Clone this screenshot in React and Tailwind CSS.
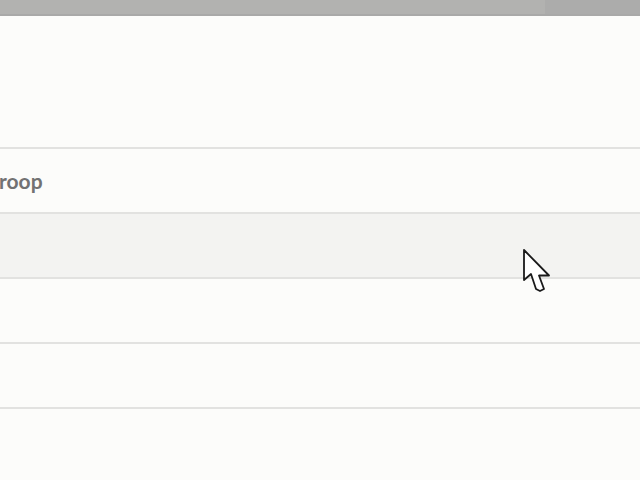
import React from 'react';

const rows = [
  {id: 1, label: 'roop'},
  {id: 2, label: '', hover: true},
  {id: 3, label: ''},
  {id: 4, label: ''},
];

const Cursor = () => (
  <svg className="absolute left-[520px] top-[247px]" width="36" height="50" viewBox="0 0 36 50">
    <path
      d="M4 3 L4 33 L11 27 L16 42 L20 44 L24 42 L19 28.5 L29 28.5 Z"
      fill="#ffffff"
      stroke="#1a1a1a"
      strokeWidth="1.8"
      strokeLinejoin="round"
    />
  </svg>
);

const App = () => {
  return (
    <div className="relative w-[640px] h-[480px] overflow-hidden bg-[#fcfcfa] font-['Lato','Open_Sans',sans-serif]">
      <div className="flex h-[14px]">
        <div className="flex-1 bg-[#b2b2b0]" />
        <div className="w-[95px] bg-[#acacab]" />
      </div>
      <div className="h-[2px] bg-[#a9a9a8]" />
      <div className="h-[131px]" />
      <ul>
        {rows.map(row => (
          <li
            key={row.id}
            className={`h-[65px] border-t-2 border-[#e2e2e0] flex items-center ${row.hover ? 'bg-[#f3f3f1]' : ''}`}
          >
            {row.label && (
              <span className="-ml-[1px] text-[21px] font-bold text-[#727272] leading-none">{row.label}</span>
            )}
          </li>
        ))}
        <li className="border-t-2 border-[#e2e2e0]" />
      </ul>
      <Cursor />
    </div>
  );
};

export default App;
